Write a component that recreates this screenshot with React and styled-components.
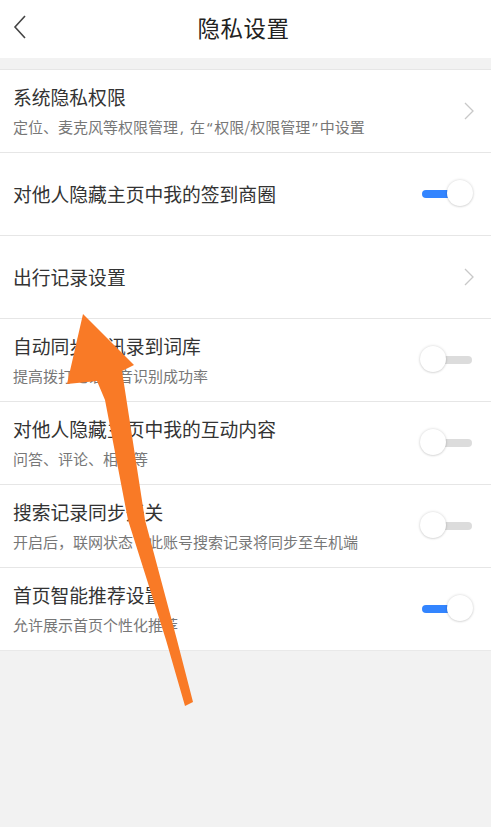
import React from "react";
import styled, { createGlobalStyle } from "styled-components";

const Global = createGlobalStyle`
  html, body { margin: 0; padding: 0; background: #f2f2f2; }
  body { font-family: "Noto Sans CJK SC", "Noto Sans", sans-serif; }
  * { box-sizing: border-box; }
`;

const Page = styled.div`
  position: relative;
  width: 491px;
  min-height: 827px;
  background: #f2f2f2;
  overflow: hidden;
`;

const Header = styled.header`
  height: 58px;
  background: #fff;
  display: flex;
  align-items: center;
  justify-content: center;
  padding-bottom: 4px;
  position: relative;
`;

const BackBtn = styled.button`
  position: absolute;
  left: 8px;
  top: 12px;
  width: 24px;
  height: 30px;
  border: 0;
  padding: 0;
  background: none;
  display: flex;
  align-items: center;
  justify-content: center;
`;

const Title = styled.h1`
  margin: 0;
  font-size: 22.5px;
  line-height: 30px;
  font-weight: 400;
  color: #222;
  letter-spacing: 0.5px;
  margin-left: -4px;
`;

const List = styled.ul`
  list-style: none;
  margin: 11px 0 0;
  padding: 0;
  background: #fff;
  border-top: 1px solid #e6e6e6;
`;

const Row = styled.li`
  height: 83px;
  display: flex;
  align-items: center;
  justify-content: space-between;
  padding: 0 18px 0 13px;
  border-bottom: 1px solid #e6e6e6;
  &:last-child { border-bottom: 1px solid #e9e9e9; }
`;

const Texts = styled.div`
  display: flex;
  flex-direction: column;
  gap: 8px;
`;

const RowTitle = styled.div`
  font-size: 18.8px;
  color: #333;
  line-height: 24px;
`;

const RowSub = styled.div`
  font-size: 15px;
  color: #777;
  line-height: 20px;
`;

const Quote = styled.span`
  font-family: "Noto Sans", sans-serif;
  padding: 0 2px;
`;

const Switch = styled.div`
  position: relative;
  width: 53px;
  height: 28px;
  &::before {
    content: "";
    position: absolute;
    left: 2px;
    right: 1px;
    top: 10px;
    height: 8px;
    border-radius: 4px;
    background: ${(p) => (p.$on ? "#3385ff" : "#dcdcdc")};
  }
`;

const Knob = styled.span`
  position: absolute;
  top: 0px;
  left: ${(p) => (p.$on ? "27px" : "0px")};
  width: 26px;
  height: 26px;
  border-radius: 50%;
  background: #fff;
  box-shadow: 0 0 3px rgba(0, 0, 0, 0.18), 0 1px 2px rgba(0, 0, 0, 0.08);
`;

const ChevronIcon = styled.svg`
  margin-right: -2px;
`;

const Arrow = styled.svg`
  position: absolute;
  left: 0;
  top: 0;
  pointer-events: none;
`;

const Chevron = () => (
  <ChevronIcon width="12" height="20" viewBox="0 0 12 20">
    <path d="M2 2 L10 10 L2 18" fill="none" stroke="#c8c8c8" strokeWidth="1.3" />
  </ChevronIcon>
);

const rows = [
  {
    title: "系统隐私权限",
    sub: (
      <>
        定位、麦克风等权限管理<Quote>, </Quote>在<Quote>“</Quote>权限/权限管理<Quote>”</Quote>中设置
      </>
    ),
    type: "link",
  },
  { title: "对他人隐藏主页中我的签到商圈", type: "switch", on: true },
  { title: "出行记录设置", type: "link" },
  { title: "自动同步通讯录到词库", sub: "提高拨打电话语音识别成功率", type: "switch", on: false },
  { title: "对他人隐藏主页中我的互动内容", sub: "问答、评论、相册等", type: "switch", on: false },
  { title: "搜索记录同步开关", sub: "开启后，联网状态下此账号搜索记录将同步至车机端", type: "switch", on: false },
  { title: "首页智能推荐设置", sub: "允许展示首页个性化推荐", type: "switch", on: true },
];

export default function App() {
  return (
    <Page>
      <Global />
      <Header>
        <BackBtn aria-label="返回">
          <svg width="16" height="26" viewBox="0 0 16 26">
            <path d="M13 2 L3 13 L13 24" fill="none" stroke="#444" strokeWidth="1.6" />
          </svg>
        </BackBtn>
        <Title>隐私设置</Title>
      </Header>
      <List>
        {rows.map((r) => (
          <Row key={r.title}>
            <Texts>
              <RowTitle>{r.title}</RowTitle>
              {r.sub && <RowSub>{r.sub}</RowSub>}
            </Texts>
            {r.type === "link" ? (
              <Chevron />
            ) : (
              <Switch $on={r.on}>
                <Knob $on={r.on} />
              </Switch>
            )}
          </Row>
        ))}
      </List>
      <Arrow width="491" height="827" viewBox="0 0 491 827">
        <polygon
          points="83,314 134,365 122,371 145,520 177,640 193,702 185,706 166,640 128,520 105,400 97,381 67,384"
          fill="#f97a26"
        />
      </Arrow>
    </Page>
  );
}
